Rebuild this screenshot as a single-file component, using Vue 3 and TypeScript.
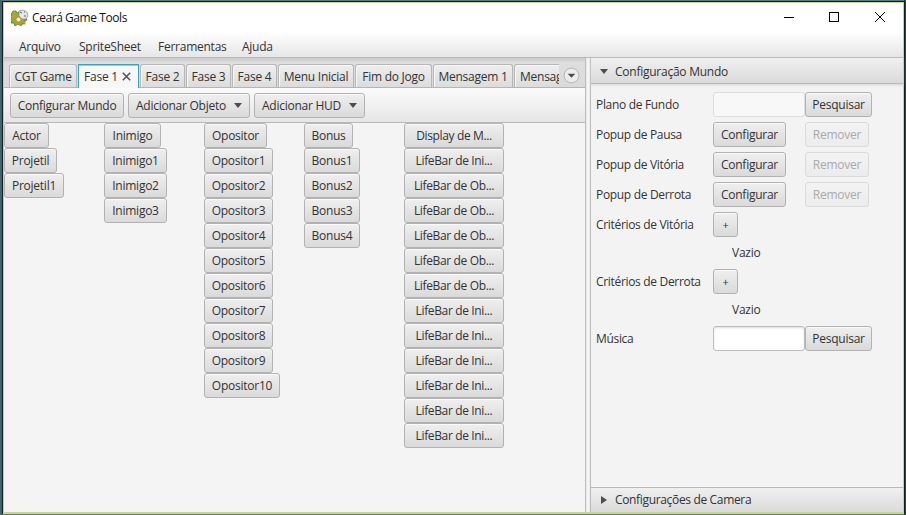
<script setup lang="ts">
interface Item { label: string; width: number }
interface Tab { label: string; width: number; active?: boolean; clipped?: boolean }

const menus: Item[] = [
  { label: 'Arquivo', width: 42 },
  { label: 'SpriteSheet', width: 61 },
  { label: 'Ferramentas', width: 66 },
  { label: 'Ajuda', width: 31 },
]

const tabs: Tab[] = [
  { label: 'CGT Game', width: 68 },
  { label: 'Fase 1', width: 61, active: true },
  { label: 'Fase 2', width: 45 },
  { label: 'Fase 3', width: 45 },
  { label: 'Fase 4', width: 45 },
  { label: 'Menu Inicial', width: 76 },
  { label: 'Fim do Jogo', width: 77 },
  { label: 'Mensagem 1', width: 80 },
  { label: 'Mensagem 2', width: 80, clipped: true },
]

const numbered = (base: string, last: number, first: number, width: number, wide = width): Item[] => {
  const list: Item[] = [{ label: base, width: first }]
  for (let i = 1; i <= last; i++) list.push({ label: base + i, width: i > 9 ? wide : width })
  return list
}

const columns: Item[][] = [
  [
    { label: 'Actor', width: 45 },
    { label: 'Projetil', width: 53 },
    { label: 'Projetil1', width: 60 },
  ],
  numbered('Inimigo', 3, 57, 63),
  numbered('Opositor', 10, 63, 69, 76),
  numbered('Bonus', 4, 49, 56),
  [
    { label: 'Display de M...', width: 100 },
    { label: 'LifeBar de Ini...', width: 100 },
    ...Array.from({ length: 5 }, () => ({ label: 'LifeBar de Ob...', width: 100 })),
    ...Array.from({ length: 6 }, () => ({ label: 'LifeBar de Ini...', width: 100 })),
  ],
]

const popups = ['Popup de Pausa', 'Popup de Vitória', 'Popup de Derrota']
const criteria = ['Critérios de Vitória', 'Critérios de Derrota']
</script>

<template>
  <div class="desktop">
    <div class="window">
      <header class="titlebar">
        <svg class="logo" width="18" height="18" viewBox="0 0 18 18">
          <path d="M2 2l3 0 1 2 2-1 1 3 4 3 3 1-1 2-2 0 1 3-3 0-1 2-3-2-3 2-1-3-3 0 1-3-2-2 2-1-1-3 1-1z" fill="#8fb03c" stroke="#4f7a2a" stroke-width=".8" />
          <path d="M1 6l3 0 0 2-3 1zM3 2l2 1-1 2-2-1zM5 13l3 1-2 2zM12 12l3 1-2 2z" fill="#d9903a" />
          <circle cx="7.500" cy="10.500" r="2.600" fill="#f6e8c8" stroke="#c87a45" />
          <path d="M8 2l4-1 4 2 1 4-2 3-4 0-3-3z" fill="#e8e8e6" stroke="#8a8682" stroke-width=".7" />
          <path d="M9 3l2 1M13 3h1M14 6v2" stroke="#5b5555" stroke-width="1" />
        </svg>
        <h1>Ceará Game Tools</h1>
        <svg class="controls" width="104" height="12" viewBox="0 0 104 12" fill="none" stroke="#000" shape-rendering="crispEdges">
          <path d="M0 6.500h10" />
          <rect x="45.500" y="1.500" width="9" height="9" />
          <path d="M91 1l10 10M101 1L91 11" shape-rendering="auto" />
        </svg>
      </header>

      <nav class="menubar">
        <span v-for="m in menus" :key="m.label" :style="{ width: m.width + 'px' }">{{ m.label }}</span>
      </nav>

      <main class="split">
        <section class="left">
          <div class="tabs">
            <div class="tab-strip">
              <div
                v-for="t in tabs"
                :key="t.label"
                class="tab"
                :class="{ active: t.active, clipped: t.clipped }"
                :style="{ width: t.width + 'px' }"
              >
                <span>{{ t.label }}</span>
                <svg v-if="t.active" width="9" height="9" viewBox="0 0 9 9">
                  <path d="M.8.800l7.400 7.400M8.200.8L.8 8.200" stroke="#555" stroke-width="1.600" />
                </svg>
              </div>
            </div>
            <svg class="more" width="17" height="17" viewBox="0 0 17 17">
              <circle cx="8.500" cy="8.500" r="7.400" fill="#ececec" stroke="#b5b5b5" />
              <path d="M4.700 6.800h7.600L8.500 10.800z" fill="#4c4c4c" />
            </svg>
          </div>

          <div class="toolbar">
            <button class="btn w-world">Configurar Mundo</button>
            <button class="btn menu w-object">Adicionar Objeto<i class="down"></i></button>
            <button class="btn menu w-hud">Adicionar HUD<i class="down"></i></button>
          </div>

          <div class="board">
            <div v-for="(col, c) in columns" :key="c" class="column">
              <button v-for="(b, i) in col" :key="i" class="btn" :style="{ width: b.width + 'px' }">{{ b.label }}</button>
            </div>
          </div>
        </section>

        <div class="divider"></div>

        <aside class="right">
          <div class="pane-title open"><i class="down"></i>Configuração Mundo</div>
          <div class="form">
            <div class="row">
              <label>Plano de Fundo</label>
              <input class="field" disabled />
              <button class="btn search">Pesquisar</button>
            </div>
            <div v-for="p in popups" :key="p" class="row">
              <label>{{ p }}</label>
              <div class="slot"><button class="btn config">Configurar</button></div>
              <button class="btn remove" disabled>Remover</button>
            </div>
            <template v-for="k in criteria" :key="k">
              <div class="row">
                <label>{{ k }}</label>
                <button class="btn plus">+</button>
              </div>
              <div class="empty">Vazio</div>
            </template>
            <div class="row">
              <label>Música</label>
              <input class="field" />
              <button class="btn search">Pesquisar</button>
            </div>
          </div>
          <div class="pane-title closed"><i class="side"></i>Configurações de Camera</div>
        </aside>
      </main>
    </div>
  </div>
</template>

<style>
body { margin: 0; overflow: hidden; }
</style>

<style scoped>
* { box-sizing: border-box; }
.desktop {
  width: 906px;
  height: 515px;
  padding: 1px 1px 1px 2px;
  background: linear-gradient(90deg, #44646d 0 2px, transparent 2px 904px, #294b50 904px), linear-gradient(#4f7a85 0 1px, #5d7b75 1px);
  font-family: "Open Sans", "Noto Sans", sans-serif;
  font-size: 12px;
  line-height: 16px;
  letter-spacing: -0.25px;
  color: #333;
  white-space: nowrap;
}
.window {
  width: 903px;
  height: 513px;
  display: flex;
  flex-direction: column;
  border: solid #101e20;
  border-width: 1px 1px 0 1px;
  padding: 1px 1px 2px;
  background: #d3d190;
}
.titlebar {
  height: 30px;
  flex: none;
  display: flex;
  align-items: center;
  background: #fff;
  padding: 0 15px 0 7px;
}
.logo { flex: none; margin-top: -1px; }
h1 { margin: 0 0 0 3px; font-size: 12px; line-height: 16px; font-weight: 400; color: #111; flex: 1; letter-spacing: -0.43px; }
.controls { flex: none; margin-top: -2px; }
.menubar {
  height: 25px;
  flex: none;
  display: flex;
  gap: 18px;
  align-items: center;
  padding: 3px 0 0 15px;
  background: linear-gradient(#fefefe, #e6e6e6);
  border-bottom: 1px solid #b9b9b9;
}
.split { flex: 1; min-height: 0; display: flex; }
.left { width: 581px; display: flex; flex-direction: column; background: #f4f4f4; }
.tabs {
  height: 30px;
  flex: none;
  display: flex;
  background: linear-gradient(#cacaca, #dedede 5px, #dadada);
  border-bottom: 1px solid #b5b5b5;
  padding: 6px 0 0 5px;
}
.tab-strip { width: 550px; height: 24px; display: flex; gap: 1px; overflow: hidden; }
.tab {
  flex: none;
  height: 23px;
  display: flex;
  justify-content: center;
  align-items: center;
  gap: 4px;
  border: 1px solid #b6b6b6;
  border-bottom: 0;
  border-radius: 3px 3px 0 0;
  background: linear-gradient(#eee, #dcdcdc);
  box-shadow: inset 1px 1px #f7f7f7;
  padding-top: 2px;
}
.tab.active { height: 24px; border: 1px solid #3ba0bf; border-bottom: 0; border-radius: 1px 1px 0 0; background: #f7f7f7; box-shadow: inset 0 1px #8dd3e5; padding: 2px 2px 1px 0; }
.tab.active svg { margin-top: -2px; }
.tab.clipped { justify-content: flex-start; padding-left: 5px; }
.more { margin: 3px 0 0 4px; flex: none; }
.toolbar {
  height: 35px;
  flex: none;
  display: flex;
  gap: 4px;
  align-items: center;
  padding-left: 6px;
  background: linear-gradient(#fbfbfb, #e6e6e6);
  border-bottom: 1px solid #b9b9b9;
}
.btn {
  flex: none;
  height: 25px;
  padding: 1px 0 0;
  border: 1px solid #b2b2b2;
  border-radius: 3px;
  background: linear-gradient(#efefef, #dadada);
  box-shadow: inset 0 1px #fafafa;
  font: inherit;
  letter-spacing: inherit;
  color: #333;
  display: flex;
  align-items: center;
  justify-content: center;
}
.btn.menu { justify-content: space-between; padding: 1px 7px 0; }
.w-world { width: 114px; }
.w-object { width: 122px; }
.w-hud { width: 111px; }
.down { width: 0; height: 0; border: 4px solid transparent; border-top: 5px solid #4d4d4d; border-bottom: 0; }
.side { width: 0; height: 0; border: 4px solid transparent; border-left: 6px solid #4d4d4d; border-right: 0; }
.board { display: flex; flex: 1; }
.column { width: 100px; }
.column:last-child { letter-spacing: -0.36px; }
.divider { width: 6px; flex: none; border: solid #bdbdbd; border-width: 0 1px; background: linear-gradient(90deg, #e4e4e4, #fafafa, #e8e8e8); }
.right { flex: 1; display: flex; flex-direction: column; background: #f3f3f3; }
.pane-title {
  flex: none;
  display: flex;
  align-items: center;
  background: linear-gradient(#f0f0f0, #dadada);
}
.open { height: 26px; padding: 3px 0 0 9px; gap: 7px; border-bottom: 1px solid #b8b8b8; box-shadow: 0 1px 2px #d4d4d4; }
.open .down { margin-top: -2px; }
.closed { height: 25px; padding-left: 10px; gap: 8px; border-top: 1px solid #b8b8b8; letter-spacing: -0.34px; }
.form { flex: 1; padding: 8px 0 0 5px; }
.row { height: 25px; display: flex; align-items: center; margin-bottom: 5px; }
label { width: 117px; flex: none; letter-spacing: -0.32px; padding-top: 1px; }
.field {
  width: 92px;
  height: 25px;
  padding: 0;
  border: 1px solid #bcbcbc;
  border-radius: 3px;
  background: #fff;
  box-shadow: inset 0 1px 2px #ddd;
}
.field:disabled { border-color: #dedede; background: #f8f8f8; box-shadow: none; }
.search { width: 67px; }
.slot { width: 92px; }
.config { width: 73px; }
.remove { width: 64px; color: #aaa; border-color: #dadada; background: linear-gradient(#f3f3f3, #ececec); box-shadow: none; }
.plus { width: 25px; font-size: 11px; }
.empty { height: 16px; margin: 8px 0 8px; padding-left: 136px; }
</style>
